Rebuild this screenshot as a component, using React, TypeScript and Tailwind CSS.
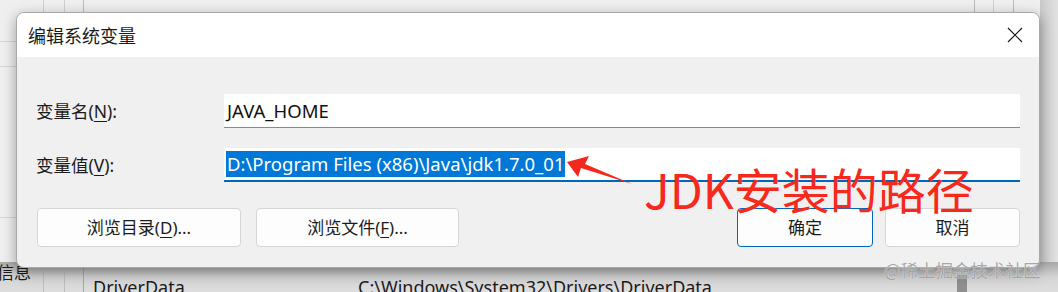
import React from "react";

const latin = { fontFamily: '"Noto Sans", "Noto Sans CJK SC", sans-serif' };
const cjk = { fontFamily: '"Noto Sans CJK SC", "Noto Sans", sans-serif' };

function U({ children }: { children: React.ReactNode }) {
  return <span className="underline underline-offset-[3px] decoration-1">{children}</span>;
}

function Btn({ children, w, primary }: { children: React.ReactNode; w: string; primary?: boolean }) {
  return (
    <div
      className={`${w} h-[39px] flex items-center justify-center rounded-[4px] bg-[#fdfdfd] text-[17px] text-[#1b1b1b] border ${
        primary ? "border-[#0067c0]" : "border-[#d6d6d6]"
      }`}
    >
      {children}
    </div>
  );
}

function Field({ label, children, active }: { label: React.ReactNode; children: React.ReactNode; active?: boolean }) {
  return (
    <div className="flex items-center h-[34px]">
      <div className="w-[188px] text-[17.5px] text-[#1b1b1b]">{label}</div>
      <div
        className={`flex-1 h-[34px] bg-white flex items-center text-[18.5px] ${
          active ? "border-b-2 border-[#0067c0] pl-[2px]" : "border-b border-[#8a8a8a] pl-[3px] text-[#111]"
        }`}
      >
        {children}
      </div>
    </div>
  );
}

export default function App() {
  return (
    <div className="relative w-[1058px] h-[292px] overflow-hidden bg-[#efefef]" style={latin}>
      {/* background window behind the dialog */}
      <div className="absolute inset-0 flex flex-col">
        <div className="flex-1 flex">
          <div className="w-[44px] border-r border-[#cfcfcf] flex flex-col">
            <div className="h-[42px] border-b border-[#d6d6d6]" />
            <div className="h-[25px] border-b border-[#d6d6d6]" />
            <div className="h-[151px] border-b border-[#d6d6d6]" />
          </div>
          <div className="w-[21px] border-r border-[#cfcfcf]" />
          <div className="w-[19px] border-r border-[#bdbdbd]" />
          <div className="flex-1" />
          <div className="w-[19px] border-l border-[#bdbdbd]" />
          <div className="w-[20px] border-l border-[#cfcfcf]" />
          <div className="w-[27px] border-l border-[#bdbdbd]" />
          <div className="w-[18px] bg-gradient-to-r from-[#c9c9c9] to-[#e2e2e2]" />
        </div>
        <div className="h-[30px] flex items-end bg-gradient-to-b from-[#a9a9a9] via-[#d4d4d4] to-[#dedede] text-[18px] text-[#1b1b1b] leading-[26px]">
          <div className="w-[44px] h-full border-r border-[#bdbdbd] flex items-center" style={cjk}>
            <span className="text-[17px] -mt-[10px] -ml-[3px]">信息</span>
          </div>
          <div className="w-[21px] h-full border-r border-[#bdbdbd]" />
          <div className="w-[19px] h-full border-r border-[#a8a8a8]" />
          <div className="w-[274px] pl-[9px] translate-y-[8px]">DriverData</div>
          <div className="flex-1 translate-y-[8px]">C:\Windows\System32\Drivers\DriverData</div>
          <div className="w-[10px] h-[17px] bg-[#8f8f8f] mr-[91px]" />
        </div>
      </div>

      {/* dialog window */}
      <div className="absolute left-[16px] top-[12px] w-[1024px] h-[256px] rounded-[8px] border border-[#a9a9a9] overflow-hidden flex flex-col bg-[#f0f0f0] shadow-[0_4px_14px_rgba(0,0,0,0.35)]">
        <div className="h-[44px] shrink-0 bg-white flex items-center justify-between pl-[11px] pr-[16px]">
          <span className="text-[18px] text-[#1a1a1a]" style={cjk}>
            编辑系统变量
          </span>
          <svg width="16" height="16" viewBox="0 0 16 16" className="text-[#1a1a1a]">
            <path d="M1 1 L15 15 M15 1 L1 15" stroke="currentColor" strokeWidth="1.2" fill="none" />
          </svg>
        </div>
        <div className="flex-1 flex flex-col gap-[20px] px-[19px] pt-[37px] pb-[21px]">
          <Field
            label={
              <>
                变量名(<U>N</U>):
              </>
            }
          >
            JAVA_HOME
          </Field>
          <Field
            active
            label={
              <>
                变量值(<U>V</U>):
              </>
            }
          >
            <span className="bg-[#0078d7] text-white leading-[26px] px-[1px]">D:\Program Files (x86)\Java\jdk1.7.0_01</span>
          </Field>
          <div className="flex items-center justify-between mt-[6px]">
            <div className="flex gap-[15px] pl-[1px]">
              <Btn w="w-[204px]">
                浏览目录(<U>D</U>)...
              </Btn>
              <Btn w="w-[203px]">
                浏览文件(<U>F</U>)...
              </Btn>
            </div>
            <div className="flex gap-[12px]">
              <Btn w="w-[136px]" primary>
                确定
              </Btn>
              <Btn w="w-[135px]">取消</Btn>
            </div>
          </div>
        </div>
      </div>

      {/* annotation drawn over the screenshot */}
      <svg className="absolute left-0 top-0" width="1058" height="292" viewBox="0 0 1058 292">
        <polygon points="567,162 589,156 585,164 632,184 581,168 578,177" fill="#f5281e" />
      </svg>
      <div className="absolute left-[644px] top-[160px] text-[48px] leading-[56px] text-[#f7281c]" style={cjk}>
        JDK安装的路径
      </div>
      <div
        className="absolute left-[884px] top-[257px] text-[17.5px] leading-[26px] text-[#8e8e8e]/80 [text-shadow:0_0_1px_#ffffff]"
        style={cjk}
      >
        @稀土掘金技术社区
      </div>
    </div>
  );
}
